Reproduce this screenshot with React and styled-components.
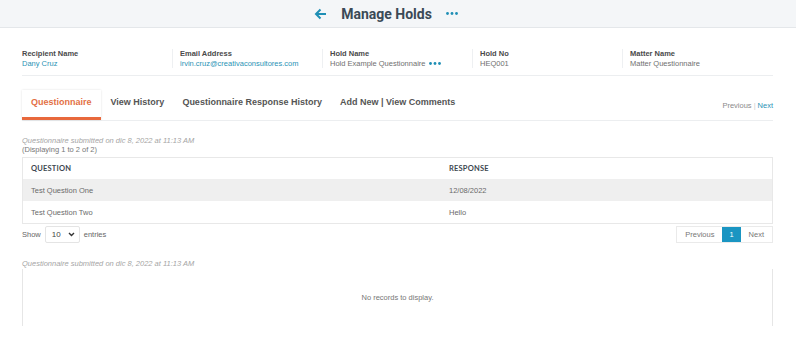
import styled, { createGlobalStyle } from "styled-components";

const Global = createGlobalStyle`
  body {
    margin: 0;
    background: #fff;
    font-family: "Liberation Sans", Arial, sans-serif;
    color: #555;
  }
`;

const Page = styled.div`
  width: 796px;
  height: 343px;
  overflow: hidden;
`;

const TopBar = styled.header`
  height: 27px;
  background: #f4f6f8;
  border-bottom: 1px solid #e4e7ea;
  display: flex;
  align-items: center;
  justify-content: center;
  gap: 14px;
  padding-right: 24px;
`;

const Title = styled.h1`
  margin: 0;
  font-family: Roboto, "Liberation Sans", sans-serif;
  font-weight: 700;
  font-size: 14px;
  color: #3b4a56;
`;

const Body = styled.main`
  padding: 21px 23px 0 22px;
`;

const InfoRow = styled.div`
  display: grid;
  grid-template-columns: repeat(5, 150px);
  padding-bottom: 7px;
  border-bottom: 1px solid #eceef0;
`;

const InfoCell = styled.div`
  padding-left: ${(p) => (p.$first ? "0" : "7px")};
  border-left: ${(p) => (p.$first ? "none" : "1px solid #eef0f2")};
  display: flex;
  flex-direction: column;
  gap: 1px;
  font-size: 7.5px;
  line-height: 9px;
`;

const Label = styled.span`
  color: #4a4a4a;
  font-weight: 600;
`;

const Value = styled.span`
  color: ${(p) => (p.$link ? "#2a93b5" : "#707070")};
  display: flex;
  align-items: center;
  gap: 4px;
`;

const TabBar = styled.nav`
  margin-top: 14px;
  display: flex;
  align-items: stretch;
  border-bottom: 1px solid #eceef0;
  height: 30px;
`;

const Tab = styled.div`
  display: flex;
  align-items: center;
  padding: 0 9px 4px;
  font-size: 9px;
  font-weight: 700;
  color: ${(p) => (p.$active ? "#e36f45" : "#555")};
  box-shadow: ${(p) => (p.$active ? "0 0 2px rgba(0,0,0,0.12)" : "none")};
  border-bottom: 3px solid ${(p) => (p.$active ? "#e8683c" : "transparent")};
  margin-right: ${(p) => (p.$active ? "1px" : "0")};
`;

const TabPager = styled.div`
  margin-left: auto;
  display: flex;
  align-items: center;
  gap: 2px;
  font-size: 7.5px;
  color: #888;
  padding-top: 1px;
`;

const PagerLink = styled.span`
  color: ${(p) => (p.$active ? "#2a93b5" : "#8a8a8a")};
`;

const Sep = styled.span`
  color: #ccc;
`;

const Submitted = styled.div`
  margin-top: ${(p) => p.$top || "15px"};
  font-size: 7.5px;
  line-height: 9px;
  font-style: italic;
  color: #a5a5a5;
`;

const Count = styled.div`
  font-size: 7.5px;
  line-height: 9px;
  color: #777;
`;

const Table = styled.table`
  margin-top: 3px;
  width: 100%;
  border-collapse: collapse;
  border: 1px solid #e8e8e8;
  font-size: 7.5px;
`;

const Th = styled.th`
  text-align: left;
  font-weight: 700;
  color: #3d4750;
  height: 21px;
  padding: 0 0 0 8px;
  font-family: Lato, "Liberation Sans", sans-serif;
  letter-spacing: 0.2px;
  width: ${(p) => p.$w || "auto"};
`;

const Tr = styled.tr`
  background: ${(p) => (p.$alt ? "#efefef" : "#fff")};
`;

const Td = styled.td`
  height: 22px;
  padding: 0 0 0 8px;
  color: #6a6a6a;
`;

const Footer = styled.div`
  margin-top: 2px;
  display: flex;
  align-items: center;
  justify-content: space-between;
`;

const Show = styled.div`
  display: flex;
  align-items: center;
  gap: 4px;
  font-size: 7.5px;
  color: #666;
`;

const Select = styled.div`
  width: 35px;
  height: 17px;
  box-sizing: border-box;
  border: 1px solid #e4e4e4;
  border-radius: 2px;
  display: flex;
  align-items: center;
  justify-content: space-between;
  padding: 0 4px 0 6px;
  font-size: 8px;
  color: #444;
`;

const Pagination = styled.div`
  display: flex;
  border: 1px solid #eaeaea;
  height: 17px;
  box-sizing: border-box;
`;

const PageBtn = styled.div`
  display: flex;
  align-items: center;
  justify-content: center;
  padding: 0 ${(p) => p.$pad || "8px"};
  font-size: 7.5px;
  background: ${(p) => (p.$active ? "#1a95c2" : "#fff")};
  color: ${(p) => (p.$active ? "#fff" : "#777")};
`;

const Empty = styled.div`
  margin-top: 1px;
  height: 57px;
  border-left: 1px solid #e6e6e6;
  border-right: 1px solid #e6e6e6;
  display: flex;
  align-items: center;
  justify-content: center;
  font-size: 7.5px;
  color: #777;
`;

const Dots = ({ size = 3 }) => (
  <svg width={size * 4} height={size} viewBox="0 0 12 3">
    <circle cx="1.5" cy="1.5" r="1.4" fill="#1f8fb5" />
    <circle cx="6" cy="1.5" r="1.4" fill="#1f8fb5" />
    <circle cx="10.5" cy="1.5" r="1.4" fill="#1f8fb5" />
  </svg>
);

const App = () => {
  return (
    <Page>
      <Global />
      <TopBar>
        <svg width="13" height="12" viewBox="0 0 13 12">
          <path d="M12 6H2M6.5 1.5L2 6l4.5 4.5" stroke="#1f8fb5" strokeWidth="2" fill="none" />
        </svg>
        <Title>Manage Holds</Title>
        <Dots size={3} />
      </TopBar>
      <Body>
        <InfoRow>
          <InfoCell $first>
            <Label>Recipient Name</Label>
            <Value $link>Dany Cruz</Value>
          </InfoCell>
          <InfoCell>
            <Label>Email Address</Label>
            <Value $link>irvin.cruz@creativaconsultores.com</Value>
          </InfoCell>
          <InfoCell>
            <Label>Hold Name</Label>
            <Value>
              Hold Example Questionnaire <Dots size={3} />
            </Value>
          </InfoCell>
          <InfoCell>
            <Label>Hold No</Label>
            <Value>HEQ001</Value>
          </InfoCell>
          <InfoCell>
            <Label>Matter Name</Label>
            <Value>Matter Questionnaire</Value>
          </InfoCell>
        </InfoRow>

        <TabBar>
          <Tab $active>Questionnaire</Tab>
          <Tab>View History</Tab>
          <Tab>Questionnaire Response History</Tab>
          <Tab>Add New | View Comments</Tab>
          <TabPager>
            <PagerLink>Previous</PagerLink>
            <Sep>|</Sep>
            <PagerLink $active>Next</PagerLink>
          </TabPager>
        </TabBar>

        <Submitted>Questionnaire submitted on dic 8, 2022 at 11:13 AM</Submitted>
        <Count>(Displaying 1 to 2 of 2)</Count>
        <Table>
          <thead>
            <tr>
              <Th $w="410px">QUESTION</Th>
              <Th>RESPONSE</Th>
            </tr>
          </thead>
          <tbody>
            <Tr $alt>
              <Td>Test Question One</Td>
              <Td>12/08/2022</Td>
            </Tr>
            <Tr>
              <Td>Test Question Two</Td>
              <Td>Hello</Td>
            </Tr>
          </tbody>
        </Table>

        <Footer>
          <Show>
            Show
            <Select>
              10
              <svg width="7" height="5" viewBox="0 0 7 5">
                <path d="M1 1l2.5 2.5L6 1" stroke="#333" strokeWidth="1.4" fill="none" />
              </svg>
            </Select>
            entries
          </Show>
          <Pagination>
            <PageBtn $pad="8px">Previous</PageBtn>
            <PageBtn $active $pad="7px">1</PageBtn>
            <PageBtn $pad="8px">Next</PageBtn>
          </Pagination>
        </Footer>

        <Submitted $top="16px">Questionnaire submitted on dic 8, 2022 at 11:13 AM</Submitted>
        <Empty>No records to display.</Empty>
      </Body>
    </Page>
  );
};

export default App;
